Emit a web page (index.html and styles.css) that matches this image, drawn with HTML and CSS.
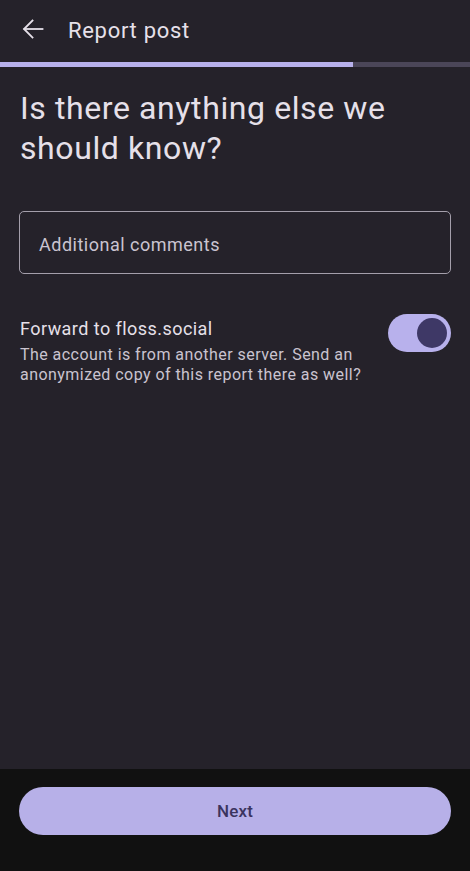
FILE: index.html
```html
<!DOCTYPE html>
<html lang="en">
<head>
<meta charset="utf-8">
<title>Report post</title>
<link rel="stylesheet" href="styles.css">
</head>
<body>
<div class="screen">
  <header class="appbar">
    <button class="back" aria-label="Back">
      <svg width="24" height="24" viewBox="0 0 24 24" fill="none" stroke="currentColor" stroke-width="1.8" stroke-linecap="square">
        <path d="M21.5 12H3.5"/>
        <path d="M11.5 3.5L3 12l8.5 8.5"/>
      </svg>
    </button>
    <h1 class="appbar-title">Report post</h1>
  </header>
  <div class="progress"><div class="progress-fill"></div></div>
  <main class="content">
    <h2 class="question">Is there anything else we should know?</h2>
    <div class="field">Additional comments</div>
    <div class="forward-row">
      <div class="forward-text">
        <div class="forward-title">Forward to floss.social</div>
        <div class="forward-desc">The account is from another server. Send an anonymized copy of this report there as well?</div>
      </div>
      <div class="switch"><div class="knob"></div></div>
    </div>
  </main>
  <footer class="footer">
    <button class="next">Next</button>
  </footer>
</div>
</body>
</html>
```
FILE: styles.css
```css
html, body {
  margin: 0;
  padding: 0;
}
body {
  background: #25222a;
  font-family: Roboto, "Noto Sans", sans-serif;
  color: #e6e0e9;
}
.screen {
  display: flex;
  flex-direction: column;
  height: 871px;
}
.appbar {
  height: 62px;
  display: flex;
  align-items: center;
  padding-left: 21px;
  box-sizing: border-box;
}
.back {
  background: none;
  border: 0;
  padding: 0;
  width: 24px;
  height: 24px;
  color: #e6e0e9;
  display: flex;
  margin-top: -4px;
}
.appbar-title {
  margin: -1px 0 0 23px;
  font-size: 22px;
  font-weight: 400;
  line-height: 28px;
  letter-spacing: 0.7px;
  color: #e6e0e9;
}
.progress {
  height: 5px;
  background: #4b4658;
}
.progress-fill {
  width: 75%;
  height: 100%;
  background: #b8b1ec;
}
.content {
  flex: 1;
  padding: 21px 19px 0 20px;
}
.question {
  margin: 0;
  font-size: 32px;
  font-weight: 400;
  line-height: 40px;
  letter-spacing: 0.6px;
  color: #e6e0e9;
}
.field {
  margin: 43px 0 0 -1px;
  height: 63px;
  box-sizing: border-box;
  border: 1px solid #a49fab;
  border-radius: 5px;
  padding: 21px 19px 0;
  font-size: 18px;
  line-height: 24px;
  letter-spacing: 0.5px;
  color: #cac4d0;
}
.forward-row {
  margin-top: 40px;
  display: flex;
  align-items: flex-start;
  gap: 16px;
}
.forward-text {
  flex: 1;
  padding-top: 3px;
}
.forward-title {
  font-size: 18px;
  line-height: 24px;
  letter-spacing: 0.45px;
  color: #e6e0e9;
  margin-bottom: 4px;
}
.forward-desc {
  font-size: 16px;
  line-height: 20px;
  letter-spacing: 0.45px;
  color: #cac4d0;
}
.switch {
  width: 63px;
  height: 38px;
  border-radius: 19px;
  background: #b8b1ec;
  display: flex;
  align-items: center;
  justify-content: flex-end;
  padding-right: 4px;
  box-sizing: border-box;
  flex-shrink: 0;
}
.knob {
  width: 30px;
  height: 30px;
  border-radius: 50%;
  background: #3e3866;
}
.footer {
  background: #111111;
  height: 102px;
  box-sizing: border-box;
  padding: 18px 19px 0;
}
.next {
  width: 100%;
  height: 48px;
  border: 0;
  border-radius: 24px;
  background: #b7b0e8;
  color: #3b345f;
  font-family: Roboto, "Noto Sans", sans-serif;
  font-size: 17px;
  font-weight: 500;
  letter-spacing: 0.2px;
  padding: 0;
}
```
